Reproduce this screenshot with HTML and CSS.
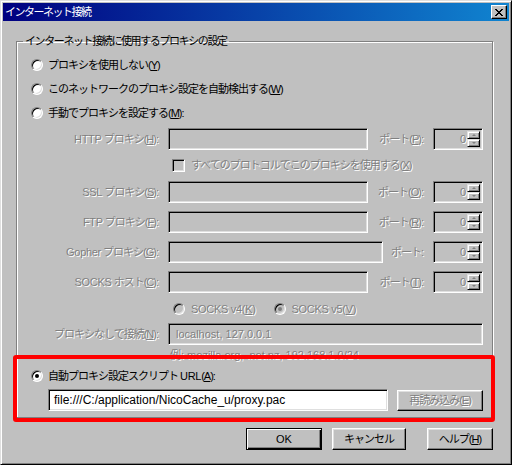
FILE: index.html
```html
<!DOCTYPE html>
<html lang="ja">
<head>
<meta charset="utf-8">
<link rel="stylesheet" href="styles.css">
</head>
<body>
<div class="window">
  <div class="titlebar">
    <span class="title">インターネット接続</span>
    <span class="close"><svg width="8" height="7" viewBox="0 0 8 7"><path d="M0 0h2v1h1v1h2v-1h1v-1h2v1h-1v1h-1v1h-1v1h1v1h1v1h1v1h-2v-1h-1v-1h-2v1h-1v1h-2v-1h1v-1h1v-1h1v-1h-1v-1h-1v-1h-1z" fill="#000"/></svg></span>
  </div>
  <div class="client">
    <fieldset class="group">
      <legend>インターネット接続に使用するプロキシの設定</legend>
      <div class="opt first"><span class="radio"></span><span class="txt">プロキシを使用しない(<u>Y</u>)</span></div>
      <div class="opt"><span class="radio"></span><span class="txt">このネットワークのプロキシ設定を自動検出する(<u>W</u>)</span></div>
      <div class="opt"><span class="radio"></span><span class="txt">手動でプロキシを設定する(<u>M</u>):</span></div>

      <div class="prow http">
        <span class="lbl dis"><span class="en">HTTP</span> プロキシ(<u>H</u>):</span>
        <span class="field"></span>
        <span class="plbl dis">ポート(<u>P</u>):</span>
        <span class="port"><span class="pval dis">0</span><span class="spin"><span class="sb up"></span><span class="sb dn"></span></span></span>
      </div>
      <div class="chkrow"><span class="check"></span><span class="txt dis">すべてのプロトコルでこのプロキシを使用する(<u>X</u>)</span></div>
      <div class="prow">
        <span class="lbl dis"><span class="en">SSL</span> プロキシ(<u>S</u>):</span>
        <span class="field"></span>
        <span class="plbl dis">ポート(<u>O</u>):</span>
        <span class="port"><span class="pval dis">0</span><span class="spin"><span class="sb up"></span><span class="sb dn"></span></span></span>
      </div>
      <div class="prow">
        <span class="lbl dis"><span class="en">FTP</span> プロキシ(<u>F</u>):</span>
        <span class="field"></span>
        <span class="plbl dis">ポート(<u>R</u>):</span>
        <span class="port"><span class="pval dis">0</span><span class="spin"><span class="sb up"></span><span class="sb dn"></span></span></span>
      </div>
      <div class="prow">
        <span class="lbl dis"><span class="en">Gopher</span> プロキシ(<u>G</u>):</span>
        <span class="field wide"></span>
        <span class="plbl dis">ポート:</span>
        <span class="port"><span class="pval dis">0</span><span class="spin"><span class="sb up"></span><span class="sb dn"></span></span></span>
      </div>
      <div class="prow">
        <span class="lbl dis"><span class="en">SOCKS</span> ホスト(<u>C</u>):</span>
        <span class="field"></span>
        <span class="plbl dis">ポート(<u>T</u>):</span>
        <span class="port"><span class="pval dis">0</span><span class="spin"><span class="sb up"></span><span class="sb dn"></span></span></span>
      </div>
      <div class="socksrow">
        <span class="radio off"></span><span class="txt dis v4 en">SOCKS v4(<u>K</u>)</span>
        <span class="radio off dot"></span><span class="txt dis en">SOCKS v5(<u>V</u>)</span>
      </div>
      <div class="prow noproxy">
        <span class="lbl dis">プロキシなしで接続(<u>N</u>):</span>
        <span class="field full dis">localhost, 127.0.0.1</span>
      </div>
      <div class="example dis">例: mozilla.org, .net.nz, 192.168.1.0/24</div>

      <div class="opt auto"><span class="radio checked"></span><span class="txt">自動プロキシ設定スクリプト <span class="en">URL</span>(<u>A</u>):</span></div>
      <div class="urlrow">
        <span class="field url">file:///C:/application/NicoCache_u/proxy.pac</span>
        <span class="btn reload dis">再読み込み(<u>E</u>)</span>
      </div>
    </fieldset>
    <div class="buttons">
      <span class="btn ok">OK</span>
      <span class="btn cancel">キャンセル</span>
      <span class="btn help">ヘルプ(<u>H</u>)</span>
    </div>
  </div>
  <div class="highlight"></div>
</div>
</body>
</html>
```

FILE: styles.css
```css
html, body {
  margin: 0;
  padding: 0;
  background: #c0c0c0;
}
body {
  font-family: "Liberation Sans", "Noto Sans CJK JP", sans-serif;
  font-size: 11px;
  letter-spacing: -1px;
  line-height: 14px;
  color: #000;
}
u { text-decoration: underline; text-underline-offset: 1px; }
.en { letter-spacing: -0.3px; }

.window {
  position: relative;
  width: 512px;
  height: 465px;
  box-sizing: border-box;
  background: #c0c0c0;
  border: 1px solid;
  border-color: #dfdfdf #000 #000 #dfdfdf;
  box-shadow: inset 1px 1px #fff, inset -1px -1px #808080;
}

.titlebar {
  margin: 2px 2px 0 2px;
  height: 18px;
  background: linear-gradient(to right, #000080, #1084d0);
  display: flex;
  align-items: center;
  justify-content: space-between;
}
.title {
  color: #fff;
  padding-left: 2px;
  line-height: 18px;
  font-size: 11px;
  letter-spacing: -1.5px;
}
.close {
  width: 16px;
  height: 14px;
  box-sizing: border-box;
  margin-right: 2px;
  background: #c0c0c0;
  border: 1px solid;
  border-color: #fff #000 #000 #fff;
  box-shadow: inset -1px -1px #808080;
  display: flex;
  align-items: center;
  justify-content: center;
  padding-right: 1px;
}
.close svg { display: block; }

.client {
  display: flex;
  flex-direction: column;
}

.group {
  margin: 13px 18px 0 15px;
  padding: 0 0 8px 0;
  border: 1px solid #808080;
  box-shadow: inset 1px 1px #fff, 1px 1px #fff;
  min-width: 0;
  height: 384px;
  box-sizing: border-box;
}
.group legend {
  margin-left: 6px;
  padding: 0 2px;
  line-height: 14px;
  letter-spacing: -1.4px;
}

.opt {
  display: flex;
  align-items: center;
  height: 16px;
  margin: 8px 0 0 14px;
}
.opt.first { margin-top: 9px; }
.opt .txt { margin-left: 5px; }

.radio {
  width: 12px;
  height: 12px;
  box-sizing: border-box;
  border-radius: 50%;
  background: #fff;
  border: 1px solid;
  border-color: #808080 #fff #fff #808080;
  box-shadow: inset 1px 1px #000, inset -1px -1px #dfdfdf;
  flex: none;
  position: relative;
}
.radio.off { background: #c0c0c0; }
.radio.checked::after,
.radio.dot::after {
  content: "";
  position: absolute;
  left: 4px;
  top: 4px;
  width: 4px;
  height: 4px;
  margin: -1px 0 0 -1px;
  border-radius: 50%;
  background: #000;
}
.radio.dot::after { background: #808080; }

.dis {
  color: #808080;
  text-shadow: 1px 1px 0 #fff;
}

.prow {
  display: flex;
  align-items: center;
  height: 22px;
  margin: 8px 9px 0 0;
}
.prow.http { margin-top: 7px; }
.lbl {
  width: 141px;
  text-align: right;
  flex: none;
  white-space: nowrap;
}
.field {
  width: 200px;
  height: 22px;
  box-sizing: border-box;
  margin-left: 10px;
  border: 1px solid;
  border-color: #808080 #fff #fff #808080;
  box-shadow: inset 1px 1px #000, inset -1px -1px #dfdfdf;
  background: #c0c0c0;
  flex: none;
  display: flex;
  align-items: center;
  padding-left: 7px;
  white-space: nowrap;
  letter-spacing: 0;
}
.field.wide { width: 215px; }
.field.full { width: 315px; }
.plbl {
  flex: 1;
  text-align: right;
  white-space: nowrap;
  margin-right: 10px;
}
.port {
  width: 50px;
  height: 22px;
  box-sizing: border-box;
  border: 1px solid;
  border-color: #808080 #fff #fff #808080;
  box-shadow: inset 1px 1px #000, inset -1px -1px #dfdfdf;
  display: flex;
  align-items: stretch;
  padding: 2px;
  flex: none;
}
.pval {
  flex: 1;
  text-align: right;
  padding-right: 1px;
  align-self: center;
  letter-spacing: 0;
}
.spin {
  width: 13px;
  display: flex;
  flex-direction: column;
}
.sb {
  flex: 1;
  box-sizing: border-box;
  border: 1px solid;
  border-color: #dfdfdf #000 #000 #dfdfdf;
  box-shadow: inset 1px 1px #fff, inset -1px -1px #808080;
  display: flex;
  align-items: center;
  justify-content: center;
}
.sb::after {
  content: "";
  width: 0;
  height: 0;
  border-left: 2px solid transparent;
  border-right: 2px solid transparent;
}
.sb.up::after { border-bottom: 2px solid #808080; }
.sb.dn::after { border-top: 2px solid #808080; }

.chkrow {
  display: flex;
  align-items: center;
  height: 16px;
  margin: 7px 0 0 155px;
}
.check {
  width: 13px;
  height: 13px;
  box-sizing: border-box;
  border: 1px solid;
  border-color: #808080 #fff #fff #808080;
  box-shadow: inset 1px 1px #000, inset -1px -1px #dfdfdf;
  background: #c0c0c0;
  flex: none;
}
.chkrow .txt { margin-left: 6px; }

.socksrow {
  display: flex;
  align-items: center;
  height: 16px;
  margin: 8px 0 0 156px;
}
.socksrow .txt { margin-left: 6px; }
.socksrow .v4 { margin-right: 18px; }

.noproxy { margin-top: 6px; }
.noproxy .field { padding-left: 7px; }

.example {
  margin: 3px 0 0 153px;
  height: 14px;
  white-space: nowrap;
  letter-spacing: 0;
}

.opt.auto { margin-top: 6px; }
.opt.auto .txt { margin-left: 5px; }

.urlrow {
  display: flex;
  align-items: center;
  margin: 5px 0 0 31px;
}
.field.url {
  margin-left: 0;
  width: 340px;
  background: #fff;
  padding-left: 5px;
  font-size: 12px;
}
.btn {
  height: 22px;
  box-sizing: border-box;
  border: 1px solid;
  border-color: #fff #000 #000 #fff;
  box-shadow: inset -1px -1px #808080, inset 1px 1px #dfdfdf;
  background: #c0c0c0;
  display: flex;
  align-items: center;
  justify-content: center;
  white-space: nowrap;
  flex: none;
}
.btn.reload {
  width: 86px;
  height: 21px;
  margin-left: 9px;
}

.buttons {
  display: flex;
  margin: 10px 0 0 245px;
}
.btn.ok {
  width: 76px;
  border-color: #000;
  box-shadow: inset 1px 1px #fff, inset -1px -1px #000, inset -2px -2px #808080;
  letter-spacing: 0;
}
.btn.cancel {
  width: 74px;
  margin-left: 10px;
}
.btn.help {
  width: 66px;
  margin-left: 21px;
}

.highlight {
  position: absolute;
  left: 12px;
  top: 354px;
  width: 482px;
  height: 67px;
  box-sizing: border-box;
  border: 4px solid #ff0000;
  border-radius: 3px;
  pointer-events: none;
}
```
